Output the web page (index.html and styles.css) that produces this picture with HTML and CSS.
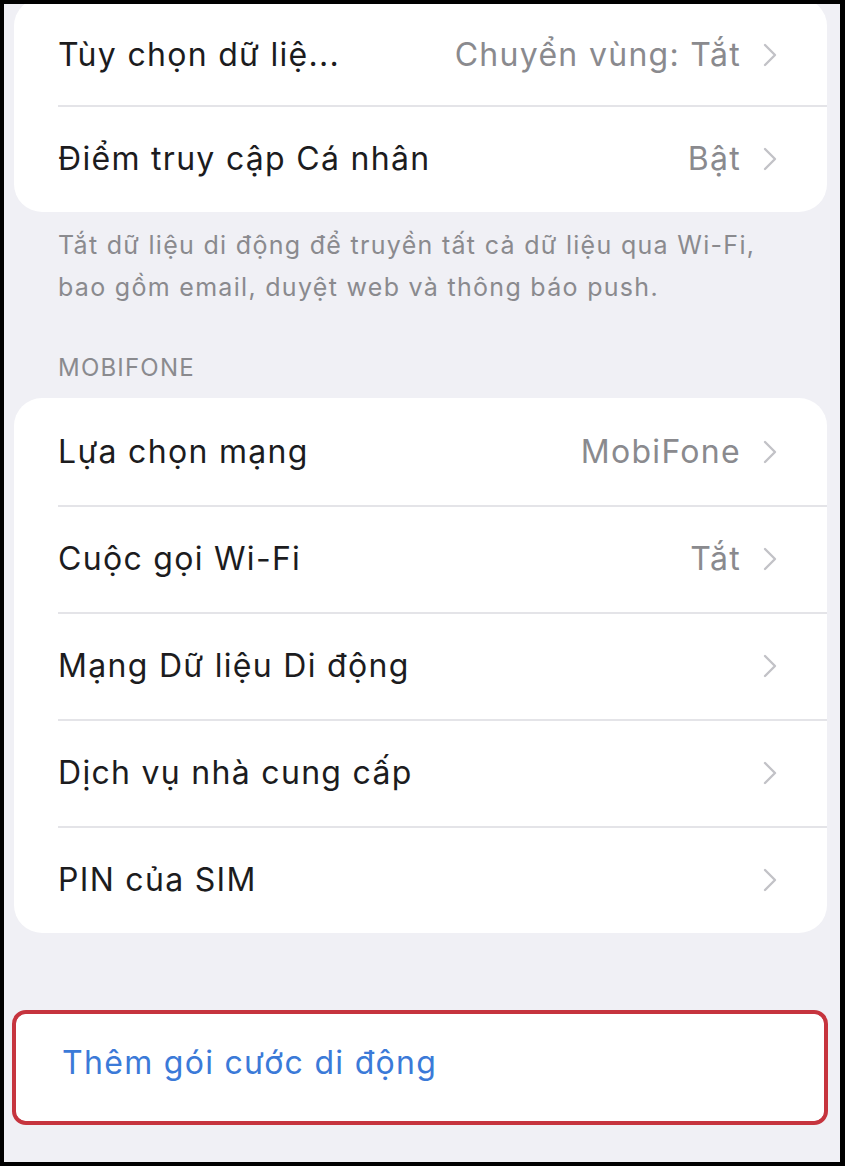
FILE: index.html
```html
<!DOCTYPE html>
<html lang="vi">
<head>
  <meta charset="UTF-8" />
  <meta name="viewport" content="width=device-width, initial-scale=1" />
  <title>Dữ liệu di động</title>
  <link rel="stylesheet" href="styles.css">
</head>
<body>
  <div class="screen">

    <!-- Nhóm đầu (bị cắt phía trên) -->
    <div class="group group-first">
      <div class="row">
        <div class="row-label">Tùy chọn dữ liệ...</div>
        <div class="row-value">Chuyển vùng: Tắt</div>
        <svg class="chevron" viewBox="0 0 14 24"><path d="M2 2 L12 12 L2 22" /></svg>
      </div>
      <div class="row">
        <div class="row-label">Điểm truy cập Cá nhân</div>
        <div class="row-value">Bật</div>
        <svg class="chevron" viewBox="0 0 14 24"><path d="M2 2 L12 12 L2 22" /></svg>
      </div>
    </div>
    <p class="group-footer">Tắt dữ liệu di động để truyền tất cả dữ liệu qua Wi-Fi, bao gồm email, duyệt web và thông báo push.</p>

    <!-- Nhà mạng -->
    <div class="group-header">MOBIFONE</div>
    <div class="group">
      <div class="row">
        <div class="row-label">Lựa chọn mạng</div>
        <div class="row-value">MobiFone</div>
        <svg class="chevron" viewBox="0 0 14 24"><path d="M2 2 L12 12 L2 22" /></svg>
      </div>
      <div class="row">
        <div class="row-label">Cuộc gọi Wi-Fi</div>
        <div class="row-value">Tắt</div>
        <svg class="chevron" viewBox="0 0 14 24"><path d="M2 2 L12 12 L2 22" /></svg>
      </div>
      <div class="row">
        <div class="row-label">Mạng Dữ liệu Di động</div>
        <svg class="chevron" viewBox="0 0 14 24"><path d="M2 2 L12 12 L2 22" /></svg>
      </div>
      <div class="row">
        <div class="row-label">Dịch vụ nhà cung cấp</div>
        <svg class="chevron" viewBox="0 0 14 24"><path d="M2 2 L12 12 L2 22" /></svg>
      </div>
      <div class="row">
        <div class="row-label">PIN của SIM</div>
        <svg class="chevron" viewBox="0 0 14 24"><path d="M2 2 L12 12 L2 22" /></svg>
      </div>
    </div>

    <!-- Thêm gói cước (khung đỏ đánh dấu) -->
    <div class="highlight">
      <div class="group">
        <div class="row row-action">
          <div class="row-label link">Thêm gói cước di động</div>
        </div>
      </div>
    </div>

  </div>
</body>
</html>
```

FILE: styles.css
```css
html, body {
  margin: 0;
  height: 100%;
}
body {
  background: #000;
  font-family: Inter, "Noto Sans", "Liberation Sans", sans-serif;
  overflow: hidden;
}
.screen {
  box-sizing: border-box;
  height: 1158px;
  margin: 4px 5px 4px 4px;
  background: #f0f0f5;
  padding: 0 13px 0 10px;
  overflow: hidden;
}

/* Nhóm bo góc kiểu iOS */
.group {
  background: #fff;
  border-radius: 28px;
  overflow: hidden;
}
.group-first {
  margin-top: -6px;
}
.group-first .row:first-child {
  padding-top: 6px;
}
.row {
  box-sizing: border-box;
  height: 107px;
  display: flex;
  align-items: center;
  padding: 0 50px 0 44px;
  position: relative;
  font-size: 32px;
  letter-spacing: 1.3px;
  color: #1c1c1e;
}
.row + .row::before {
  content: "";
  position: absolute;
  top: 0;
  left: 44px;
  right: 0;
  height: 2px;
  background: #e4e4e8;
}
.row-label {
  flex: 1;
  white-space: nowrap;
}
.row-value {
  color: #8a8a8e;
  margin-right: 22px;
}
.chevron {
  width: 14px;
  height: 24px;
  fill: none;
  stroke: #c2c2c7;
  stroke-width: 2.4;
  stroke-linecap: round;
  stroke-linejoin: round;
}

.group-footer {
  margin: 0;
  padding: 12px 40px 0 44px;
  font-size: 25px;
  letter-spacing: 1.3px;
  line-height: 42px;
  color: #8a8a8e;
}
.group-header {
  padding: 39px 44px 9px 44px;
  height: 42px;
  font-size: 24px;
  letter-spacing: 1.2px;
  line-height: 42px;
  color: #8a8a8e;
}

/* Khung đỏ */
.highlight {
  margin: 77px -1px 0 -2px;
  border: 4px solid #c6343e;
  border-radius: 14px;
  overflow: hidden;
}
.highlight .group {
  border-radius: 10px;
}
.row-action {
  height: 107px;
  padding: 0 50px 10px 46px;
}
.link {
  color: #3b7ad8;
}
```
